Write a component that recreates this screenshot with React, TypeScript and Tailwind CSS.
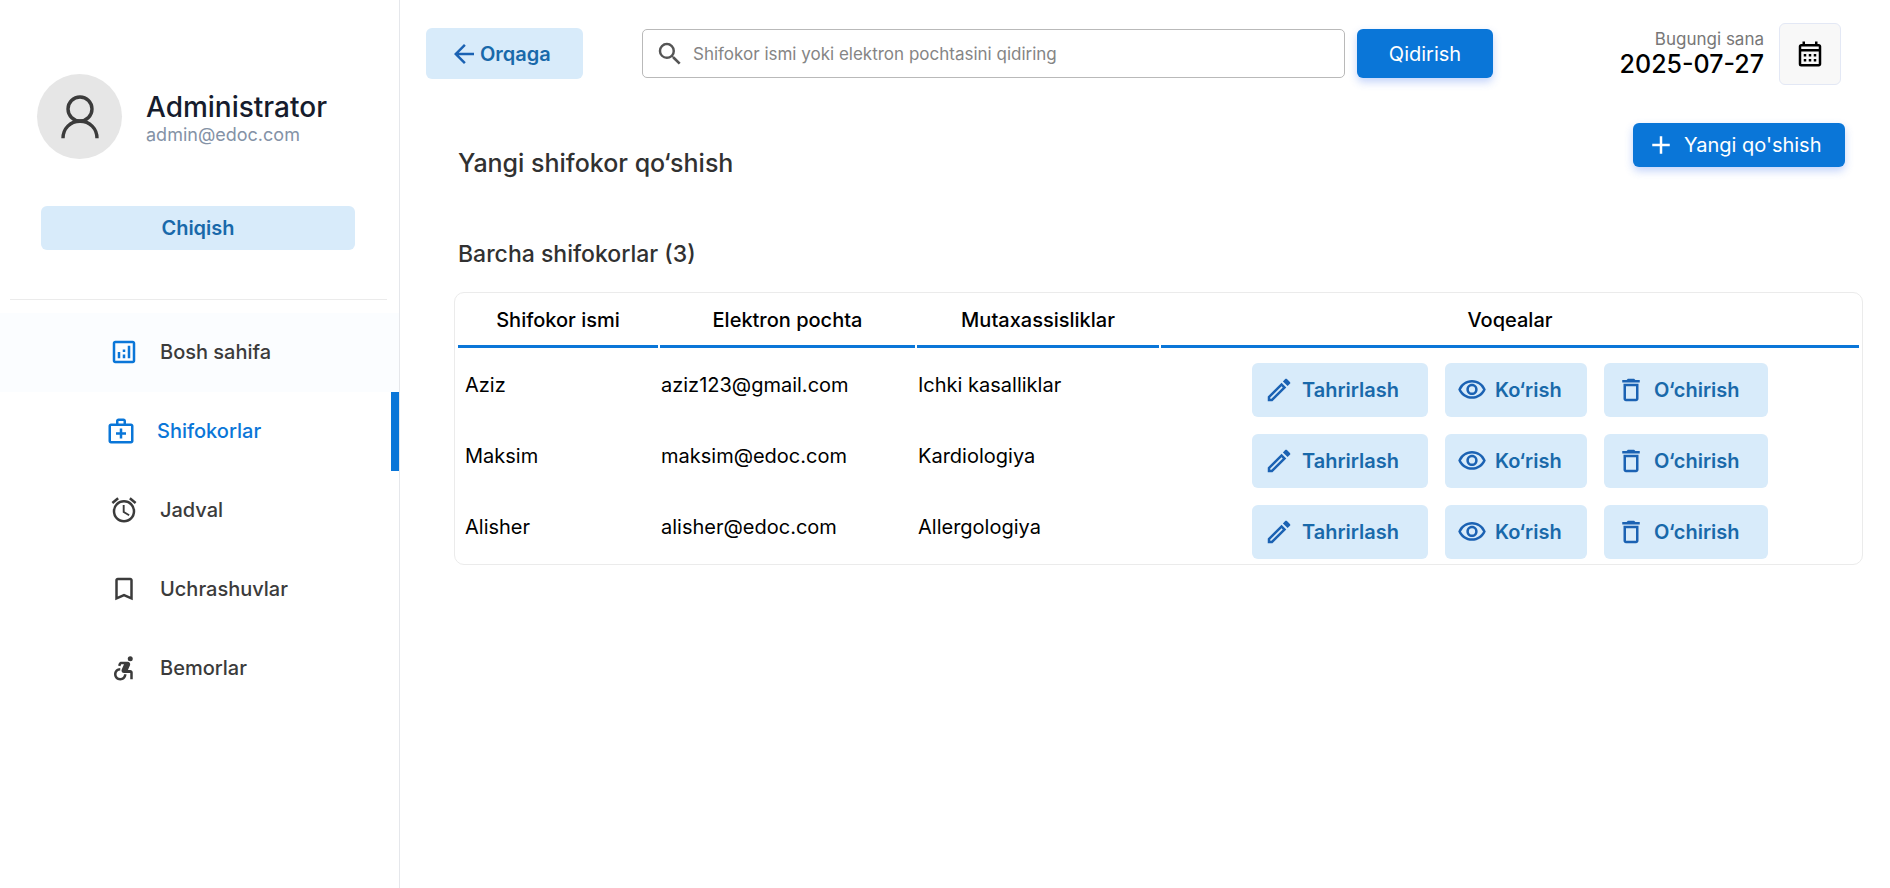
import type { ReactNode } from "react";
import {
  MdOutlineAnalytics,
  MdOutlineMedicalServices,
  MdOutlineAlarm,
  MdBookmarkBorder,
  MdAccessibleForward,
  MdOutlineEdit,
  MdOutlineVisibility,
  MdOutlineDelete,
  MdArrowBack,
  MdSearch,
  MdAdd,
  MdOutlineCalendarMonth,
} from "react-icons/md";

const nav = [
  { label: "Bosh sahifa", icon: <MdOutlineAnalytics size={30} />, state: "hover" },
  { label: "Shifokorlar", icon: <MdOutlineMedicalServices size={30} />, state: "active" },
  { label: "Jadval", icon: <MdOutlineAlarm size={30} />, state: "idle" },
  { label: "Uchrashuvlar", icon: <MdBookmarkBorder size={30} />, state: "idle" },
  { label: "Bemorlar", icon: <MdAccessibleForward size={30} />, state: "idle" },
];

const navStyles: Record<string, string> = {
  hover: "bg-[#fbfdff] pl-[109px] text-[#3b3b3b]",
  active: "border-r-8 border-[#0a76d8] pl-[106px] text-[#0a76d8]",
  idle: "pl-[109px] text-[#3b3b3b]",
};

const doctors = [
  { name: "Aziz", email: "aziz123@gmail.com", specialty: "Ichki kasalliklar" },
  { name: "Maksim", email: "maksim@edoc.com", specialty: "Kardiologiya" },
  { name: "Alisher", email: "alisher@edoc.com", specialty: "Allergologiya" },
];

function SoftButton({ icon, width, children }: { icon: ReactNode; width: string; children: ReactNode }) {
  return (
    <button
      type="button"
      className={`flex h-[54px] items-center gap-2 rounded-md bg-[#d8ebfa] pl-3 text-xl font-semibold text-[#1969aa] ${width}`}
    >
      <span className="text-[#1b62b3]">{icon}</span>
      {children}
    </button>
  );
}

export default function App() {
  return (
    <div className="flex min-h-screen bg-white font-['Inter',sans-serif] text-black">
      <aside className="w-[400px] shrink-0 border-r border-[#e5e7eb]">
        <div className="flex items-center gap-6 pt-[74px] pl-[37px]">
          <div className="flex size-[85px] items-center justify-center rounded-full bg-[#e6e6e6]">
            <svg width="40" height="46" viewBox="0 0 40 46" fill="none" stroke="#3b3b3b" strokeWidth="3.4">
              <circle cx="20" cy="15" r="12" />
              <path d="M3 44.3C3 34.6 10.2 27.2 20 27.2S37 34.6 37 44.3" />
            </svg>
          </div>
          <div className="pt-2">
            <p className="text-[28px] leading-7 font-medium text-[#161c2d]">Administrator</p>
            <p className="text-lg leading-7 text-[#8492a6]">admin@edoc.com</p>
          </div>
        </div>
        <div className="mt-[47px] pr-11 pl-[41px]">
          <button type="button" className="h-11 w-full rounded-md bg-[#d8ebfa] text-xl font-semibold text-[#1969aa]">
            Chiqish
          </button>
        </div>
        <hr className="mt-[49px] mr-3 mb-[13px] ml-[10px] border-[#ebebeb]" />
        <nav>
          {nav.map((item) => (
            <a key={item.label} href="#" className={`flex h-[79px] items-center gap-[21px] pb-0.5 text-xl font-medium ${navStyles[item.state]}`}>
              <span className={item.state === "hover" ? "text-[#0a76d8]" : ""}>{item.icon}</span>
              {item.label}
            </a>
          ))}
        </nav>
      </aside>

      <main className="min-w-0 flex-1">
        <header className="flex items-center pt-[23px] pr-[49px] pl-[26px]">
          <button type="button" className="mb-px flex h-[51px] w-[157px] shrink-0 items-center gap-px rounded-md bg-[#d8ebfa] pl-[23px] text-xl font-semibold text-[#1969aa]">
            <MdArrowBack size={30} className="text-[#1b62b3]" />
            Orqaga
          </button>
          <form className="mb-px ml-[59px] flex max-w-[851px] flex-1 items-center gap-3" onSubmit={(e) => e.preventDefault()}>
            <label className="flex h-[49px] min-w-0 flex-1 items-center gap-2 rounded-[5px] border border-[#b9b9b9] pl-3">
              <MdSearch size={30} className="shrink-0 text-[#555555]" />
              <input
                type="search"
                aria-label="Qidirish"
                placeholder="Shifokor ismi yoki elektron pochtasini qidiring"
                className="h-full min-w-0 flex-1 bg-transparent text-[17px] outline-none placeholder:text-[#858585]"
              />
            </label>
            <button type="submit" className="h-[49px] w-[136px] rounded-md bg-[#0a76d8] text-xl text-white shadow-[0_4px_8px_rgba(57,108,240,0.3)]">
              Qidirish
            </button>
          </form>
          <div className="ml-auto pb-1 text-right">
            <p className="text-[17px] leading-6 text-[#777777]">Bugungi sana</p>
            <p className="text-[25px] leading-[26px] font-medium">2025-07-27</p>
          </div>
          <button type="button" aria-label="Kalendar" className="ml-[15px] flex size-[62px] items-center justify-center rounded-md border border-[#e3e8f5] bg-[#f8f8f8]">
            <MdOutlineCalendarMonth size={30} />
          </button>
        </header>

        <div className="flex items-start justify-between pt-[38px] pr-[45px] pl-[58px]">
          <h1 className="pt-6 text-[25px] leading-8 font-medium text-[#313131]">Yangi shifokor qo‘shish</h1>
          <button type="button" className="flex h-11 w-[212px] items-center gap-2 rounded-md bg-[#0a76d8] pl-[13px] text-xl text-white shadow-[0_4px_8px_rgba(57,108,240,0.3)]">
            <MdAdd size={30} />
            Yangi qo'shish
          </button>
        </div>

        <h2 className="mt-[59px] pl-[58px] text-[23px] leading-8 font-medium text-[#313131]">Barcha shifokorlar (3)</h2>

        <div className="mt-[22px] mr-[27px] ml-[54px] rounded-[10px] border border-[#ebebeb] p-px">
          <table className="w-full border-separate border-spacing-[2px]">
            <thead>
              <tr className="h-[52px] text-xl">
                <th className="w-[200px] border-b-3 border-[#0a76d8] pb-px font-medium">Shifokor ismi</th>
                <th className="w-[255px] border-b-3 border-[#0a76d8] pb-px font-medium">Elektron pochta</th>
                <th className="w-[242px] border-b-3 border-[#0a76d8] pb-px font-medium">Mutaxassisliklar</th>
                <th className="border-b-3 border-[#0a76d8] pb-px font-medium">Voqealar</th>
              </tr>
            </thead>
            <tbody>
              {doctors.map((d) => (
                <tr key={d.name} className="text-xl">
                  <td className="pl-[7px]">{d.name}</td>
                  <td className="pl-px">{d.email}</td>
                  <td className="pl-px">{d.specialty}</td>
                  <td className="pt-[13px] pb-[2px]">
                    <div className="flex justify-center gap-[17px]">
                      <SoftButton width="w-[176px]" icon={<MdOutlineEdit size={30} />}>Tahrirlash</SoftButton>
                      <SoftButton width="w-[142px]" icon={<MdOutlineVisibility size={30} />}>Ko‘rish</SoftButton>
                      <SoftButton width="w-[164px]" icon={<MdOutlineDelete size={30} />}>O‘chirish</SoftButton>
                    </div>
                  </td>
                </tr>
              ))}
            </tbody>
          </table>
        </div>
      </main>
    </div>
  );
}
